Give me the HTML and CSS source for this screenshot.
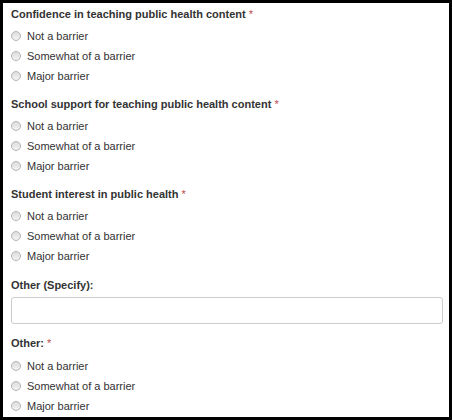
FILE: index.html
```html
<!DOCTYPE html>
<html>
<head>
<meta charset="utf-8">
<link rel="stylesheet" href="styles.css">
</head>
<body>
<div class="frame">
  <div class="group">
    <div class="label">Confidence in teaching public health content <span class="req">*</span></div>
    <div class="options">
      <label class="opt"><span class="radio"></span>Not a barrier</label>
      <label class="opt"><span class="radio"></span>Somewhat of a barrier</label>
      <label class="opt"><span class="radio"></span>Major barrier</label>
    </div>
  </div>
  <div class="group">
    <div class="label">School support for teaching public health content <span class="req">*</span></div>
    <div class="options">
      <label class="opt"><span class="radio"></span>Not a barrier</label>
      <label class="opt"><span class="radio"></span>Somewhat of a barrier</label>
      <label class="opt"><span class="radio"></span>Major barrier</label>
    </div>
  </div>
  <div class="group">
    <div class="label">Student interest in public health <span class="req">*</span></div>
    <div class="options">
      <label class="opt"><span class="radio"></span>Not a barrier</label>
      <label class="opt"><span class="radio"></span>Somewhat of a barrier</label>
      <label class="opt"><span class="radio"></span>Major barrier</label>
    </div>
  </div>
  <div class="group group-text">
    <div class="label">Other (Specify):</div>
    <input class="text" type="text">
  </div>
  <div class="group group-last">
    <div class="label">Other: <span class="req">*</span></div>
    <div class="options">
      <label class="opt"><span class="radio"></span>Not a barrier</label>
      <label class="opt"><span class="radio"></span>Somewhat of a barrier</label>
      <label class="opt"><span class="radio"></span>Major barrier</label>
    </div>
  </div>
</div>
</body>
</html>
```
FILE: styles.css
```css
html, body {
  margin: 0;
  padding: 0;
  background: #fff;
}
.frame {
  box-sizing: border-box;
  width: 452px;
  height: 420px;
  border: 3px solid #000;
  padding: 3px 6px 0 8px;
  display: flex;
  flex-direction: column;
  gap: 10px;
  overflow: hidden;
  font-family: "Liberation Sans", Arial, sans-serif;
  font-size: 11px;
  color: #333;
}
.group {
  display: flex;
  flex-direction: column;
}
.group-text {
  margin-top: 1px;
}
.group-last .label {
  margin-top: 1px;
}
.group-last .options {
  margin-top: 5px;
}
.label {
  font-weight: bold;
  line-height: 16px;
  height: 16px;
  font-size: 11px;
}
.req {
  color: #b94a48;
  font-weight: normal;
}
.options {
  margin-top: 4px;
  display: flex;
  flex-direction: column;
}
.opt {
  display: flex;
  align-items: center;
  height: 20px;
  line-height: 20px;
}
.radio {
  box-sizing: border-box;
  width: 10px;
  height: 10px;
  border-radius: 50%;
  border: 1px solid #b3b3b3;
  background: linear-gradient(#dcdcdc, #f4f4f4);
  margin: 0 6px 0 0;
  flex: none;
}
.text {
  box-sizing: border-box;
  margin-top: 4px;
  width: 432px;
  height: 27px;
  border: 1px solid #ccc;
  border-radius: 3px;
  background: #fff;
  padding: 0 8px;
  font: inherit;
}
```
